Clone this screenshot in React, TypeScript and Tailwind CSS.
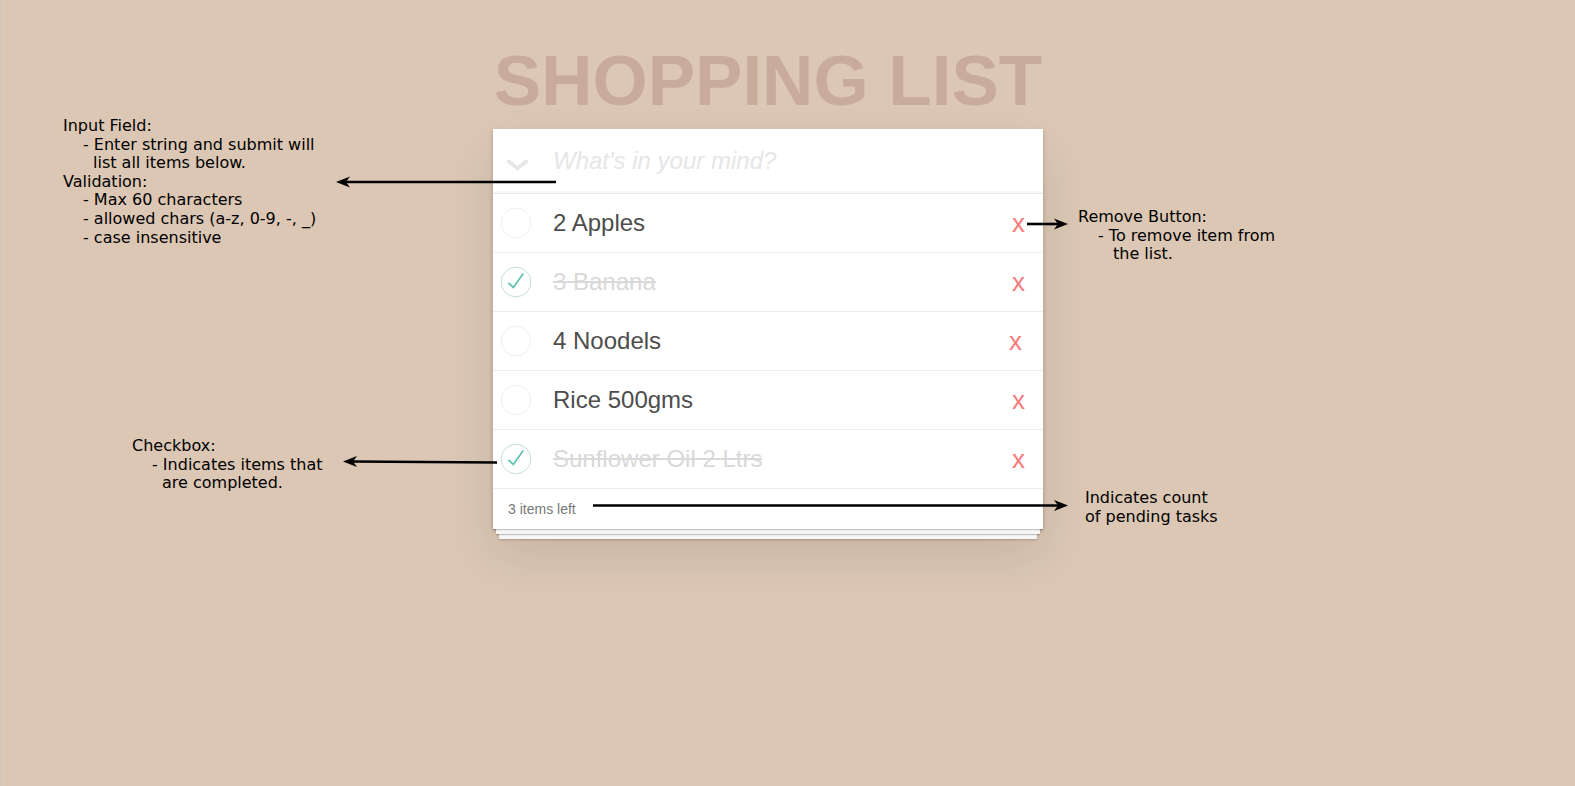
import React, { useState } from "react";

type Item = { text: string; done: boolean; xr: string };

const initial: Item[] = [
  { text: "2 Apples", done: false, xr: "mr-[18px]" },
  { text: "3 Banana", done: true, xr: "mr-[18px]" },
  { text: "4 Noodels", done: false, xr: "mr-[21px]" },
  { text: "Rice 500gms", done: false, xr: "mr-[18px]" },
  { text: "Sunflower Oil 2 Ltrs", done: true, xr: "mr-[18px]" },
];

function Toggle({ done }: { done: boolean }) {
  return (
    <svg width="40" height="40" viewBox="0 0 40 40" className="shrink-0">
      <circle cx="20" cy="20" r="14.8" fill="none" stroke={done ? "#bddad5" : "#ededed"} strokeWidth="0.9" />
      {done && (
        <polyline points="12.3,20.8 17.3,25.4 27.3,11.4" fill="none" stroke="#5dc2af" strokeWidth="1.7" />
      )}
    </svg>
  );
}

function Arrow({ x1, y1, x2, y2 }: { x1: number; y1: number; x2: number; y2: number }) {
  const dir = Math.sign(x2 - x1);
  const len = 14;
  const hw = 5.5;
  const back = x2 - dir * len;
  const notch = x2 - dir * 10;
  return (
    <g>
      <line x1={x1} y1={y1} x2={notch} y2={y2} stroke="#000" strokeWidth="2.6" />
      <path d={`M${x2} ${y2} L${back} ${y2 - hw} L${notch} ${y2} L${back} ${y2 + hw} Z`} fill="#000" />
    </g>
  );
}

export default function App() {
  const [items, setItems] = useState<Item[]>(initial);
  const left = items.filter((i) => !i.done).length;

  return (
    <div className="relative min-h-screen h-[786px] w-full overflow-hidden bg-[#dbc7b4] border-l border-[#cfc6bd]">
      <div className="ml-[492px] w-[550px] pt-[45px] font-['Liberation_Sans',Arial,sans-serif]">
        <h1 className="text-center text-[71px] font-bold leading-none text-[#c9ab9b]">SHOPPING LIST</h1>
        <div className="mt-[13px] bg-white shadow-[0_2px_4px_0_rgba(0,0,0,0.2),0_25px_50px_0_rgba(0,0,0,0.1)]">
          <div className="flex h-[65px] items-center border-b border-[#e6e6e6] shadow-[inset_0_-2px_1px_rgba(0,0,0,0.03)]">
            <svg width="23" height="12" viewBox="0 0 23 12" className="ml-[13px] mt-[8px] shrink-0">
              <polyline points="1.5,1.5 11.5,9.5 21.5,1.5" fill="none" stroke="#e6e6e6" strokeWidth="3.6" />
            </svg>
            <input
              className="ml-[24px] w-full bg-transparent text-[24px] text-[#4d4d4d] outline-none placeholder:italic placeholder:text-[#e6e6e6]"
              placeholder="What's in your mind?"
            />
          </div>
          <ul>
            {items.map((it, i) => (
              <li key={i} className="flex h-[59px] items-center border-b border-[#ededed]">
                <button
                  className="ml-[3px] shrink-0"
                  onClick={() =>
                    setItems(items.map((x, j) => (j === i ? { ...x, done: !x.done } : x)))
                  }
                >
                  <Toggle done={it.done} />
                </button>
                <span
                  className={
                    "ml-[17px] flex-1 text-[24px] leading-[1.2] " +
                    (it.done ? "text-[#d9d9d9] line-through" : "text-[#4d4d4d]")
                  }
                >
                  {it.text}
                </span>
                <button
                  className={"text-[26px] leading-none text-[#f57a7a] " + it.xr}
                  onClick={() => setItems(items.filter((_, j) => j !== i))}
                >
                  x
                </button>
              </li>
            ))}
          </ul>
          <div className="flex h-[40px] items-center bg-white px-[15px] text-[14px] text-[#777] shadow-[0_1px_1px_rgba(0,0,0,0.2),0_8px_0_-3px_#f6f6f6,0_9px_1px_-3px_rgba(0,0,0,0.2),0_16px_0_-6px_#f6f6f6,0_17px_2px_-6px_rgba(0,0,0,0.2)]">
            {left} items left
          </div>
        </div>
      </div>

      <div className="font-['DejaVu_Sans',sans-serif] text-[16px] leading-[18.6px] text-black">
        <div className="absolute left-[62px] top-[117px]">
          <div>Input Field:</div>
          <div className="pl-[20px]">- Enter string and submit will</div>
          <div className="pl-[30px]">list all items below.</div>
          <div>Validation:</div>
          <div className="pl-[20px]">- Max 60 characters</div>
          <div className="pl-[20px]">- allowed chars (a-z, 0-9, -, _)</div>
          <div className="pl-[20px]">- case insensitive</div>
        </div>
        <div className="absolute left-[1077px] top-[208px]">
          <div>Remove Button:</div>
          <div className="pl-[20px]">- To remove item from</div>
          <div className="pl-[35px]">the list.</div>
        </div>
        <div className="absolute left-[131px] top-[437px]">
          <div>Checkbox:</div>
          <div className="pl-[20px]">- Indicates items that</div>
          <div className="pl-[30px]">are completed.</div>
        </div>
        <div className="absolute left-[1084px] top-[489px]">
          <div>Indicates count</div>
          <div>of pending tasks</div>
        </div>
      </div>

      <svg className="pointer-events-none absolute left-0 top-0" width="1575" height="786">
        <Arrow x1={555} y1={182} x2={335} y2={182} />
        <Arrow x1={1026} y1={224} x2={1067} y2={224} />
        <Arrow x1={496} y1={462.5} x2={342} y2={461.5} />
        <Arrow x1={592} y1={505.5} x2={1067} y2={505.5} />
      </svg>
    </div>
  );
}
